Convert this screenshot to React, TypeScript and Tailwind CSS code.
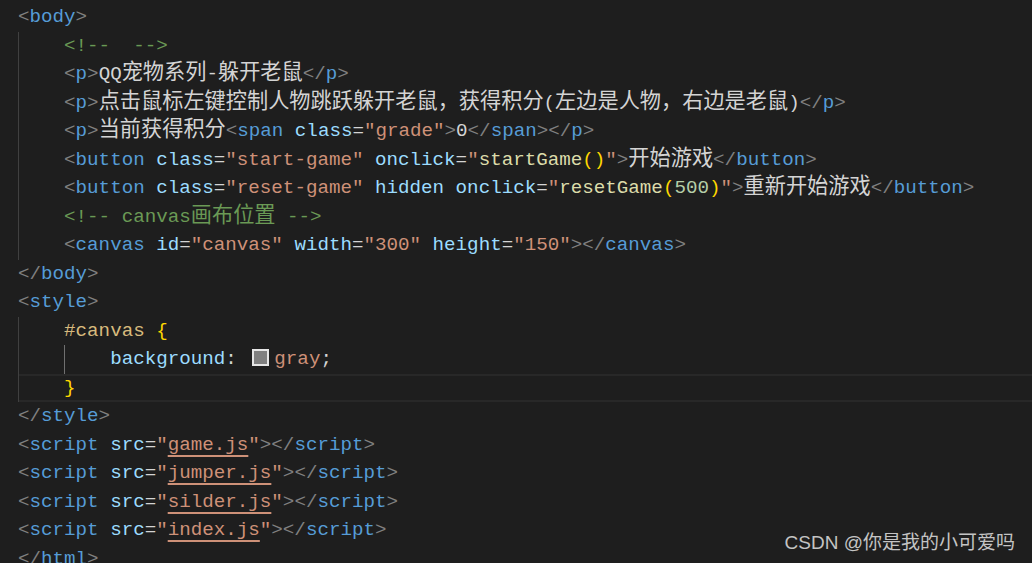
import React from "react";

type Tok = { c: string; t: string; u?: boolean; swatch?: boolean };

const P = "text-[#808080]";
const TAG = "text-[#569cd6]";
const ATTR = "text-[#9cdcfe]";
const STR = "text-[#ce9178]";
const TXT = "text-[#d4d4d4]";
const CMT = "text-[#6a9955]";
const FN = "text-[#dcdcaa]";
const BR = "text-[#ffd700]";
const NUM = "text-[#b5cea8]";
const SEL = "text-[#d7ba7d]";

interface Line {
  guides?: string[];
  active?: boolean;
  toks: Tok[];
}

const tk = (c: string, t: string): Tok => ({ c, t });
const open = (name: string): Tok[] => [tk(P, "<"), tk(TAG, name)];
const close = (name: string): Tok[] => [tk(P, "</"), tk(TAG, name), tk(P, ">")];
const attr = (name: string, value: string): Tok[] => [
  tk(TXT, " "),
  tk(ATTR, name),
  tk(TXT, "="),
  tk(STR, `"${value}"`),
];

const G1 = "border-[#404040]";
const G2 = "border-[#707070]";

const script = (file: string): Line => ({
  toks: [
    ...open("script"),
    tk(TXT, " "),
    tk(ATTR, "src"),
    tk(TXT, "="),
    tk(STR, '"'),
    { c: STR, t: file, u: true },
    tk(STR, '"'),
    tk(P, ">"),
    ...close("script"),
  ],
});

const lines: Line[] = [
  { toks: [...open("body"), tk(P, ">")] },
  { guides: [G1], toks: [tk(CMT, "<!--  -->")] },
  {
    guides: [G1],
    toks: [...open("p"), tk(P, ">"), tk(TXT, "QQ宠物系列-躲开老鼠"), ...close("p")],
  },
  {
    guides: [G1],
    toks: [
      ...open("p"),
      tk(P, ">"),
      tk(TXT, "点击鼠标左键控制人物跳跃躲开老鼠，获得积分(左边是人物，右边是老鼠)"),
      ...close("p"),
    ],
  },
  {
    guides: [G1],
    toks: [
      ...open("p"),
      tk(P, ">"),
      tk(TXT, "当前获得积分"),
      ...open("span"),
      ...attr("class", "grade"),
      tk(P, ">"),
      tk(TXT, "0"),
      ...close("span"),
      ...close("p"),
    ],
  },
  {
    guides: [G1],
    toks: [
      ...open("button"),
      ...attr("class", "start-game"),
      tk(TXT, " "),
      tk(ATTR, "onclick"),
      tk(TXT, "="),
      tk(STR, '"'),
      tk(FN, "startGame"),
      tk(BR, "()"),
      tk(STR, '"'),
      tk(P, ">"),
      tk(TXT, "开始游戏"),
      ...close("button"),
    ],
  },
  {
    guides: [G1],
    toks: [
      ...open("button"),
      ...attr("class", "reset-game"),
      tk(TXT, " "),
      tk(ATTR, "hidden"),
      tk(TXT, " "),
      tk(ATTR, "onclick"),
      tk(TXT, "="),
      tk(STR, '"'),
      tk(FN, "resetGame"),
      tk(BR, "("),
      tk(NUM, "500"),
      tk(BR, ")"),
      tk(STR, '"'),
      tk(P, ">"),
      tk(TXT, "重新开始游戏"),
      ...close("button"),
    ],
  },
  { guides: [G1], toks: [tk(CMT, "<!-- canvas画布位置 -->")] },
  {
    guides: [G1],
    toks: [
      ...open("canvas"),
      ...attr("id", "canvas"),
      ...attr("width", "300"),
      ...attr("height", "150"),
      tk(P, ">"),
      ...close("canvas"),
    ],
  },
  { toks: close("body") },
  { toks: [...open("style"), tk(P, ">")] },
  { guides: [G1], toks: [tk(SEL, "#canvas"), tk(TXT, " "), tk(BR, "{")] },
  {
    guides: [G1, G2],
    toks: [
      tk(ATTR, "background"),
      tk(TXT, ": "),
      { c: "", t: "", swatch: true },
      tk(STR, "gray"),
      tk(TXT, ";"),
    ],
  },
  { guides: [G1], active: true, toks: [tk(BR, "}")] },
  { toks: close("style") },
  script("game.js"),
  script("jumper.js"),
  script("silder.js"),
  script("index.js"),
  { toks: close("html") },
];

// split text into latin / CJK runs so CJK gets the wider font
const CJK_RE = /([\u3000-\u303f\u3400-\u9fff\uff00-\uffef]+)/;

const Runs: React.FC<{ text: string }> = ({ text }) => (
  <>
    {text.split(CJK_RE).map((part, i) =>
      CJK_RE.test(part) ? (
        <span
          key={i}
          className="font-['Noto_Sans_CJK_SC',sans-serif] text-[21.2px] leading-[0]"
        >
          {part}
        </span>
      ) : (
        <React.Fragment key={i}>{part}</React.Fragment>
      )
    )}
  </>
);

const CodeLine: React.FC<{ line: Line }> = ({ line }) => (
  <div
    className={
      "flex h-[28.5px] items-stretch whitespace-pre leading-[28.5px] " +
      (line.active
        ? "shadow-[inset_0_2px_0_#282828,inset_0_-2px_0_#282828]"
        : "")
    }
  >
    {line.guides?.map((g, i) => (
      <span key={i} className={"inline-block w-[46.08px] shrink-0 border-l " + g} />
    ))}
    <span>
      {line.toks.map((t, i) =>
        t.swatch ? (
          <span
            key={i}
            className="mr-[5px] ml-[4px] inline-block h-[17px] w-[17px] translate-y-[2px] border-2 border-[#e6e6e6] bg-[#808080]"
          />
        ) : (
          <span
            key={i}
            className={
              t.c +
              (t.u
                ? " underline decoration-[#ce9178] decoration-2 underline-offset-[5px]"
                : "")
            }
          >
            <Runs text={t.t} />
          </span>
        )
      )}
    </span>
  </div>
);

export default function App() {
  return (
    <div className="relative h-[563px] w-[1032px] overflow-hidden bg-[#1e1e1e]">
      <div className="pt-[3px] pl-[18px] font-['Liberation_Mono',monospace] text-[19.2px] text-[#d4d4d4]">
        {lines.map((l, i) => (
          <CodeLine key={i} line={l} />
        ))}
      </div>
      <div className="absolute right-[17px] bottom-[8px] font-['Liberation_Sans','Noto_Sans_CJK_SC',sans-serif] text-[19px] leading-[24px] text-[#c4c4c4]">
        CSDN @你是我的小可爱吗
      </div>
    </div>
  );
}
